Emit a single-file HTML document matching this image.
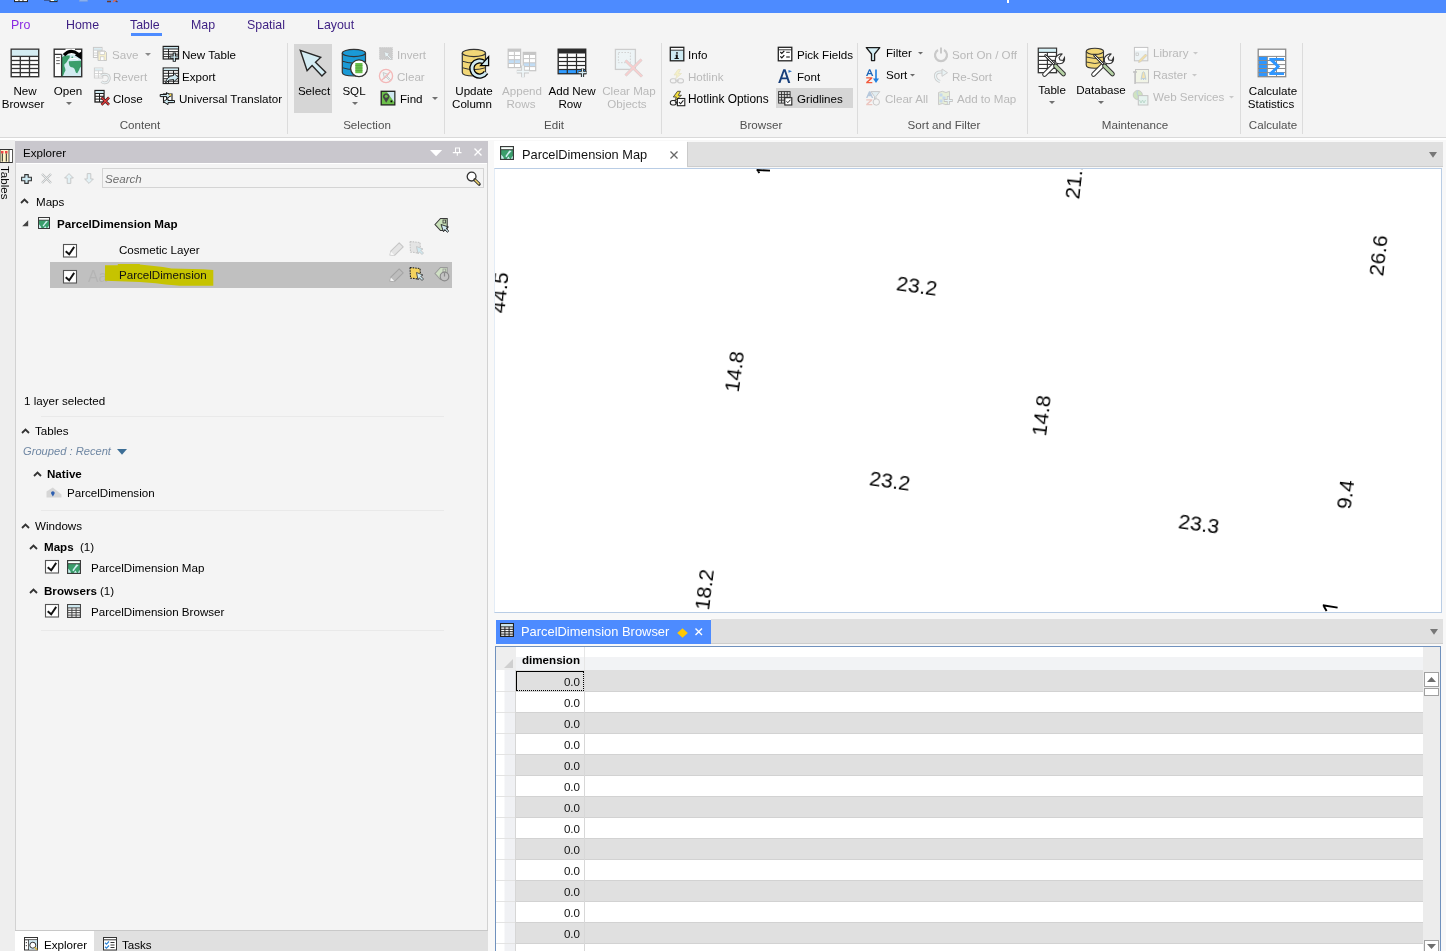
<!DOCTYPE html>
<html><head><meta charset="utf-8">
<style>
*{margin:0;padding:0;box-sizing:border-box}
html,body{width:1446px;height:951px;overflow:hidden;background:#f8f8f8;font-family:"Liberation Sans",sans-serif;font-size:11.6px;color:#000}
.a{position:absolute}
.t{position:absolute;white-space:nowrap;line-height:14px;will-change:transform}
svg{position:absolute;overflow:visible}
</style></head><body>

<div class="a" style="left:0px;top:0px;width:1446px;height:13px;background:#4d8bff;"></div>
<div class="a" style="left:0px;top:13px;width:50px;height:1px;background:#c9d9f2;"></div>
<svg style="left:14px;top:0px" width="14" height="2.2" viewBox="0 0 14 2.2"><rect x="0.5" y="-2" width="13" height="3.6" fill="#fff" stroke="#222" stroke-width="1"/><path d="M5 -2V1.6M9 -2V1.6" stroke="#222" stroke-width="1"/></svg>
<svg style="left:44px;top:0px" width="14" height="2.2" viewBox="0 0 14 2.2"><path d="M0 0.5H5" stroke="#3a5a9a" stroke-width="1"/><rect x="6" y="-2" width="7" height="3.6" fill="#fff" stroke="#222" stroke-width="1"/><rect x="10" y="-2" width="3" height="3" fill="#2a9ae8"/></svg>
<svg style="left:79px;top:0px" width="9" height="2" viewBox="0 0 9 2"><rect x="0.5" y="-2" width="8" height="3.2" fill="#8fb4f0" stroke="#7aa0e0" stroke-width="0.8"/></svg>
<svg style="left:107px;top:0px" width="11" height="2.4" viewBox="0 0 11 2.4"><path d="M0 1.5H4M6 -1 L10.5 2" stroke="#6a3a2a" stroke-width="1.4"/><path d="M6 2 L10 -1" stroke="#e06a5a" stroke-width="1.4"/></svg>
<div class="a" style="left:1007px;top:0px;width:2px;height:3px;background:#ffffff;"></div>
<div class="a" style="left:0px;top:13px;width:1446px;height:124px;background:#f4f4f4;"></div>
<div class="a" style="left:0px;top:137px;width:1446px;height:1px;background:#d9d9d9;"></div>
<div class="a" style="left:0px;top:138px;width:1446px;height:2px;background:#ffffff;"></div>
<div class="t" style="left:11px;top:18.00px;font-size:12.4px;color:#8a2be2;">Pro</div>
<div class="t" style="left:66px;top:18.00px;font-size:12.4px;color:#3c1e82;">Home</div>
<div class="t" style="left:130px;top:18.00px;font-size:12.4px;color:#3c1e82;">Table</div>
<div class="a" style="left:131px;top:33px;width:31px;height:3px;background:#4d8bff;"></div>
<div class="t" style="left:191px;top:18.00px;font-size:12.4px;color:#3c1e82;">Map</div>
<div class="t" style="left:247px;top:18.00px;font-size:12.4px;color:#3c1e82;">Spatial</div>
<div class="t" style="left:317px;top:18.00px;font-size:12.4px;color:#3c1e82;">Layout</div>
<div class="a" style="left:287px;top:43px;width:1px;height:91px;background:#dcdcdc;"></div>
<div class="a" style="left:444px;top:43px;width:1px;height:91px;background:#dcdcdc;"></div>
<div class="a" style="left:661px;top:43px;width:1px;height:91px;background:#dcdcdc;"></div>
<div class="a" style="left:857px;top:43px;width:1px;height:91px;background:#dcdcdc;"></div>
<div class="a" style="left:1027px;top:43px;width:1px;height:91px;background:#dcdcdc;"></div>
<div class="a" style="left:1240px;top:43px;width:1px;height:91px;background:#dcdcdc;"></div>
<div class="a" style="left:1302px;top:43px;width:1px;height:91px;background:#dcdcdc;"></div>
<div class="t" style="left:40px;width:200px;text-align:center;top:117.98px;font-size:11.6px;color:#505050;">Content</div>
<div class="t" style="left:266.5px;width:200px;text-align:center;top:117.98px;font-size:11.6px;color:#505050;">Selection</div>
<div class="t" style="left:454px;width:200px;text-align:center;top:117.98px;font-size:11.6px;color:#505050;">Edit</div>
<div class="t" style="left:661px;width:200px;text-align:center;top:117.98px;font-size:11.6px;color:#505050;">Browser</div>
<div class="t" style="left:843.5px;width:200px;text-align:center;top:117.98px;font-size:11.6px;color:#505050;">Sort and Filter</div>
<div class="t" style="left:1034.5px;width:200px;text-align:center;top:117.98px;font-size:11.6px;color:#505050;">Maintenance</div>
<div class="t" style="left:1172.5px;width:200px;text-align:center;top:117.98px;font-size:11.6px;color:#505050;">Calculate</div>
<div class="t" style="left:-75.5px;width:200px;text-align:center;top:83.98px;font-size:11.6px;">New</div>
<div class="t" style="left:-76.7px;width:200px;text-align:center;top:96.98px;font-size:11.6px;">Browser</div>
<div class="t" style="left:-31.599999999999994px;width:200px;text-align:center;top:83.98px;font-size:11.6px;">Open</div>
<svg style="left:65.5px;top:102px" width="6" height="4" viewBox="0 0 6 4"><path d="M0 0H6L3.0 3.0Z" fill="#707070"/></svg>
<div class="t" style="left:112px;top:47.98px;font-size:11.6px;color:#b9b9b9;">Save</div>
<svg style="left:144.5px;top:53px" width="6" height="4" viewBox="0 0 6 4"><path d="M0 0H6L3.0 3.0Z" fill="#8a8a8a"/></svg>
<div class="t" style="left:113.4px;top:69.98px;font-size:11.6px;color:#b9b9b9;">Revert</div>
<div class="t" style="left:113.4px;top:91.98px;font-size:11.6px;">Close</div>
<div class="t" style="left:182px;top:47.98px;font-size:11.6px;">New Table</div>
<div class="t" style="left:182px;top:69.98px;font-size:11.6px;">Export</div>
<div class="t" style="left:178.6px;top:91.98px;font-size:11.6px;">Universal Translator</div>
<div class="a" style="left:294px;top:44px;width:38px;height:69px;background:#d6d6d6;"></div>
<div class="t" style="left:213.5px;width:200px;text-align:center;top:83.98px;font-size:11.6px;">Select</div>
<div class="t" style="left:254px;width:200px;text-align:center;top:83.98px;font-size:11.6px;">SQL</div>
<svg style="left:351.5px;top:102px" width="6" height="4" viewBox="0 0 6 4"><path d="M0 0H6L3.0 3.0Z" fill="#707070"/></svg>
<div class="t" style="left:397.4px;top:47.98px;font-size:11.6px;color:#b9b9b9;">Invert</div>
<div class="t" style="left:397.4px;top:69.98px;font-size:11.6px;color:#b9b9b9;">Clear</div>
<div class="t" style="left:400px;top:91.98px;font-size:11.6px;">Find</div>
<svg style="left:431.5px;top:97px" width="6" height="4" viewBox="0 0 6 4"><path d="M0 0H6L3.0 3.0Z" fill="#707070"/></svg>
<div class="t" style="left:374px;width:200px;text-align:center;top:83.98px;font-size:11.6px;">Update</div>
<div class="t" style="left:372px;width:200px;text-align:center;top:96.98px;font-size:11.6px;">Column</div>
<div class="t" style="left:421.5px;width:200px;text-align:center;top:83.98px;font-size:11.6px;color:#b9b9b9;">Append</div>
<div class="t" style="left:420.5px;width:200px;text-align:center;top:96.98px;font-size:11.6px;color:#b9b9b9;">Rows</div>
<div class="t" style="left:472px;width:200px;text-align:center;top:83.98px;font-size:11.6px;">Add New</div>
<div class="t" style="left:470.29999999999995px;width:200px;text-align:center;top:96.98px;font-size:11.6px;">Row</div>
<div class="t" style="left:528.7px;width:200px;text-align:center;top:83.98px;font-size:11.6px;color:#b9b9b9;">Clear Map</div>
<div class="t" style="left:527.3px;width:200px;text-align:center;top:96.98px;font-size:11.6px;color:#b9b9b9;">Objects</div>
<div class="t" style="left:688.4px;top:47.98px;font-size:11.6px;">Info</div>
<div class="t" style="left:688.4px;top:69.98px;font-size:11.6px;color:#b9b9b9;">Hotlink</div>
<div class="t" style="left:688.4px;top:91.88px;font-size:11.9px;">Hotlink Options</div>
<div class="a" style="left:776px;top:88px;width:77px;height:20px;background:#d6d6d6;"></div>
<div class="t" style="left:796.6px;top:47.98px;font-size:11.6px;">Pick Fields</div>
<div class="t" style="left:796.6px;top:69.98px;font-size:11.6px;">Font</div>
<div class="t" style="left:796.6px;top:91.98px;font-size:11.6px;">Gridlines</div>
<div class="t" style="left:885.5px;top:46.48px;font-size:11.6px;">Filter</div>
<svg style="left:918px;top:51.5px" width="5" height="4" viewBox="0 0 5 4"><path d="M0 0H5L2.5 2.5Z" fill="#6a6a6a"/></svg>
<div class="t" style="left:885.5px;top:68.48px;font-size:11.6px;">Sort</div>
<svg style="left:910px;top:73.5px" width="5" height="4" viewBox="0 0 5 4"><path d="M0 0H5L2.5 2.5Z" fill="#6a6a6a"/></svg>
<div class="t" style="left:885px;top:91.98px;font-size:11.6px;color:#b9b9b9;">Clear All</div>
<div class="t" style="left:952px;top:47.98px;font-size:11.6px;color:#b9b9b9;">Sort On / Off</div>
<div class="t" style="left:952px;top:69.98px;font-size:11.6px;color:#b9b9b9;">Re-Sort</div>
<div class="t" style="left:956.5px;top:91.98px;font-size:11.6px;color:#b9b9b9;">Add to Map</div>
<div class="t" style="left:952px;width:200px;text-align:center;top:82.98px;font-size:11.6px;">Table</div>
<svg style="left:1049px;top:101px" width="6" height="4" viewBox="0 0 6 4"><path d="M0 0H6L3.0 3.0Z" fill="#707070"/></svg>
<div class="t" style="left:1001px;width:200px;text-align:center;top:82.98px;font-size:11.6px;">Database</div>
<svg style="left:1098px;top:101px" width="6" height="4" viewBox="0 0 6 4"><path d="M0 0H6L3.0 3.0Z" fill="#707070"/></svg>
<div class="t" style="left:1153px;top:46.48px;font-size:11.6px;color:#b9b9b9;">Library</div>
<svg style="left:1193px;top:52px" width="5" height="4" viewBox="0 0 5 4"><path d="M0 0H5L2.5 2.5Z" fill="#c8c8c8"/></svg>
<div class="t" style="left:1153px;top:68.48px;font-size:11.6px;color:#b9b9b9;">Raster</div>
<svg style="left:1192px;top:74px" width="5" height="4" viewBox="0 0 5 4"><path d="M0 0H5L2.5 2.5Z" fill="#c8c8c8"/></svg>
<div class="t" style="left:1153px;top:90.48px;font-size:11.6px;color:#b9b9b9;">Web Services</div>
<svg style="left:1228.5px;top:96px" width="5" height="4" viewBox="0 0 5 4"><path d="M0 0H5L2.5 2.5Z" fill="#c8c8c8"/></svg>
<div class="t" style="left:1172.7px;width:200px;text-align:center;top:83.98px;font-size:11.6px;">Calculate</div>
<div class="t" style="left:1171.2px;width:200px;text-align:center;top:96.98px;font-size:11.6px;">Statistics</div>
<div class="a" style="left:0px;top:140px;width:15px;height:811px;background:#eeeeee;"></div>
<div class="t" style="left:-11px;top:175px;font-size:11.6px;transform:rotate(90deg);transform-origin:center;width:32px;">Tables</div>
<div class="a" style="left:15px;top:141px;width:473px;height:22px;background:#c9c7cd;"></div>
<div class="t" style="left:23px;top:145.98px;font-size:11.6px;">Explorer</div>
<div class="a" style="left:15px;top:163px;width:473px;height:767px;background:#f4f4f4;"></div>
<div class="a" style="left:15px;top:163px;width:1px;height:767px;background:#d2d2d2;"></div>
<div class="a" style="left:487px;top:163px;width:1px;height:767px;background:#d2d2d2;"></div>
<div class="a" style="left:16px;top:163px;width:471px;height:1px;background:#ffffff;"></div>
<div class="a" style="left:15px;top:930px;width:473px;height:1px;background:#c8c8c8;"></div>
<div class="a" style="left:15px;top:931px;width:473px;height:20px;background:#e0e0e0;"></div>
<div class="a" style="left:15px;top:931px;width:79px;height:20px;background:#ffffff;"></div>
<div class="t" style="left:43.6px;top:937.78px;font-size:11.6px;">Explorer</div>
<div class="t" style="left:122px;top:937.78px;font-size:11.6px;">Tasks</div>
<div class="a" style="left:102px;top:168px;width:382px;height:20px;background:#f4f4f4;border:1px solid #d4d4d4"></div>
<div class="t" style="left:105px;top:171.98px;font-size:11.6px;color:#6e6e6e;font-style:italic;">Search</div>
<div class="t" style="left:35.7px;top:195.48px;font-size:11.6px;">Maps</div>
<div class="t" style="left:57.3px;top:216.98px;font-size:11.6px;font-weight:bold;">ParcelDimension Map</div>
<div class="t" style="left:118.7px;top:242.78px;font-size:11.6px;">Cosmetic Layer</div>
<div class="a" style="left:50px;top:262px;width:402px;height:26px;background:#c0c0c0;"></div>
<div class="t" style="left:24.2px;top:393.98px;font-size:11.6px;">1 layer selected</div>
<div class="a" style="left:41px;top:416px;width:403px;height:1px;background:#e9e9e9;"></div>
<div class="t" style="left:34.6px;top:424.28px;font-size:11.6px;">Tables</div>
<div class="t" style="left:22.5px;top:444.14px;font-size:11.15px;color:#6f87a3;font-style:italic;">Grouped : Recent</div>
<div class="t" style="left:47.4px;top:466.98px;font-size:11.6px;font-weight:bold;">Native</div>
<div class="t" style="left:66.7px;top:485.98px;font-size:11.6px;">ParcelDimension</div>
<div class="a" style="left:41px;top:510px;width:403px;height:1px;background:#e9e9e9;"></div>
<div class="t" style="left:34.6px;top:518.68px;font-size:11.6px;">Windows</div>
<div class="t" style="left:44.3px;top:540.18px;font-size:11.6px;font-weight:bold;">Maps</div>
<div class="t" style="left:79.5px;top:540.18px;font-size:11.6px;">(1)</div>
<div class="t" style="left:91px;top:560.98px;font-size:11.6px;">ParcelDimension Map</div>
<div class="t" style="left:44.3px;top:583.98px;font-size:11.6px;font-weight:bold;">Browsers</div>
<div class="t" style="left:100px;top:583.98px;font-size:11.6px;">(1)</div>
<div class="t" style="left:91px;top:604.98px;font-size:11.6px;">ParcelDimension Browser</div>
<div class="a" style="left:41px;top:630px;width:403px;height:1px;background:#e9e9e9;"></div>
<div class="a" style="left:494px;top:141px;width:193px;height:27px;background:#ffffff;"></div>
<div class="t" style="left:521.5px;top:148.06px;font-size:12.8px;color:#111;">ParcelDimension Map</div>
<div class="a" style="left:687px;top:142px;width:756px;height:25px;background:#e0e0e0;"></div>
<div class="a" style="left:687px;top:142px;width:1px;height:25px;background:#cacaca;"></div>
<div class="a" style="left:687px;top:166px;width:756px;height:1px;background:#cdcdcd;"></div>
<div class="a" style="left:494px;top:168px;width:948px;height:445px;background:#ffffff;border:1px solid #b9cde5;border-left-color:#e3ecf6"></div>
<div class="a" style="left:496px;top:620px;width:215px;height:24px;background:#4d8bff;"></div>
<div class="t" style="left:521.3px;top:625.43px;font-size:12.9px;color:#ffffff;">ParcelDimension Browser</div>
<div class="a" style="left:711px;top:619px;width:732px;height:24px;background:#e0e0e0;"></div>
<div class="a" style="left:711px;top:643px;width:732px;height:1px;background:#cdcdcd;"></div>
<div class="a" style="left:495px;top:646px;width:946px;height:305px;background:#ffffff;border:1px solid #7091bd;border-bottom:none"></div>
<div class="a" style="left:495px;top:169px;width:946px;height:443px;overflow:hidden">
<div class="t" style="left:361.7px;top:106.3px;width:120px;text-align:center;font-size:21px;line-height:21px;color:#000;transform:rotate(8deg)">23.2</div>
<div class="t" style="left:179.3px;top:192.0px;width:120px;text-align:center;font-size:21px;line-height:21px;color:#000;transform:rotate(-82deg)">14.8</div>
<div class="t" style="left:518.5px;top:-1.0px;width:120px;text-align:center;font-size:21px;line-height:21px;color:#000;transform:rotate(-83.5deg)">21.1</div>
<div class="t" style="left:822.5px;top:76.3px;width:120px;text-align:center;font-size:21px;line-height:21px;color:#000;transform:rotate(-83.5deg)">26.6</div>
<div class="t" style="left:-56.5px;top:112.5px;width:120px;text-align:center;font-size:21px;line-height:21px;color:#000;transform:rotate(-84deg)">44.5</div>
<div class="t" style="left:486.1px;top:235.7px;width:120px;text-align:center;font-size:21px;line-height:21px;color:#000;transform:rotate(-83deg)">14.8</div>
<div class="t" style="left:334.7px;top:301.1px;width:120px;text-align:center;font-size:21px;line-height:21px;color:#000;transform:rotate(8deg)">23.2</div>
<div class="t" style="left:643.5px;top:344.1px;width:120px;text-align:center;font-size:21px;line-height:21px;color:#000;transform:rotate(8deg)">23.3</div>
<div class="t" style="left:790.0px;top:314.5px;width:120px;text-align:center;font-size:21px;line-height:21px;color:#000;transform:rotate(-83deg)">9.4</div>
<div class="t" style="left:149.0px;top:410.2px;width:120px;text-align:center;font-size:21px;line-height:21px;color:#000;transform:rotate(-83deg)">18.2</div>
</div>
<svg style="left:740px;top:160px" width="50" height="30" viewBox="0 0 50 30"><path d="M16.6 10 L30 10.6 M17.2 10 L19.4 13" stroke="#000" stroke-width="1.9"/></svg>
<svg style="left:1310px;top:590px" width="40" height="30" viewBox="0 0 40 30"><path d="M12.8 15.3 L27.6 17.6 M13.4 15.4 L16.6 20.9" stroke="#000" stroke-width="1.9"/></svg>
<div class="a" style="left:496px;top:647px;width:927px;height:23px;background:linear-gradient(#ffffff 0,#ffffff 45%,#f2f3f5 45%,#f2f3f5 100%);"></div>
<div class="a" style="left:496px;top:647px;width:20px;height:23px;background:#eeeeee;"></div>
<svg style="left:504px;top:659px" width="9" height="9" viewBox="0 0 9 9"><path d="M9 0V9H0Z" fill="#cfcfcf"/></svg>
<div class="t" style="left:522px;top:653.18px;font-size:11.6px;color:#000;font-weight:bold;">dimension</div>
<div class="a" style="left:584px;top:647px;width:1px;height:23px;background:#e6e6e6;"></div>
<div class="a" style="left:496px;top:670px;width:20px;height:21px;background:linear-gradient(90deg,#ffffff 0,#ffffff 40%,#f0f1f4 45%,#f0f1f4 100%);"></div>
<div class="a" style="left:516px;top:670px;width:907px;height:21px;background:#e0e0e0;"></div>
<div class="a" style="left:515px;top:670px;width:1px;height:21px;background:#d6d6d6;"></div>
<div class="a" style="left:584px;top:670px;width:1px;height:21px;background:#d8d8d8;"></div>
<div class="t" style="left:520px;width:60px;text-align:right;top:674.98px;color:#111">0.0</div>
<div class="a" style="left:496px;top:691px;width:20px;height:21px;background:linear-gradient(90deg,#ffffff 0,#ffffff 40%,#f0f1f4 45%,#f0f1f4 100%);"></div>
<div class="a" style="left:516px;top:691px;width:907px;height:21px;background:#ffffff;"></div>
<div class="a" style="left:496px;top:691px;width:20px;height:1px;background:#e3e3e3;"></div>
<div class="a" style="left:516px;top:691px;width:907px;height:1px;background:#d2d2d2;"></div>
<div class="a" style="left:515px;top:691px;width:1px;height:21px;background:#d6d6d6;"></div>
<div class="a" style="left:584px;top:691px;width:1px;height:21px;background:#d8d8d8;"></div>
<div class="t" style="left:520px;width:60px;text-align:right;top:695.98px;color:#111">0.0</div>
<div class="a" style="left:496px;top:712px;width:20px;height:21px;background:linear-gradient(90deg,#ffffff 0,#ffffff 40%,#f0f1f4 45%,#f0f1f4 100%);"></div>
<div class="a" style="left:516px;top:712px;width:907px;height:21px;background:#e0e0e0;"></div>
<div class="a" style="left:496px;top:712px;width:20px;height:1px;background:#e3e3e3;"></div>
<div class="a" style="left:516px;top:712px;width:907px;height:1px;background:#d2d2d2;"></div>
<div class="a" style="left:515px;top:712px;width:1px;height:21px;background:#d6d6d6;"></div>
<div class="a" style="left:584px;top:712px;width:1px;height:21px;background:#d8d8d8;"></div>
<div class="t" style="left:520px;width:60px;text-align:right;top:716.98px;color:#111">0.0</div>
<div class="a" style="left:496px;top:733px;width:20px;height:21px;background:linear-gradient(90deg,#ffffff 0,#ffffff 40%,#f0f1f4 45%,#f0f1f4 100%);"></div>
<div class="a" style="left:516px;top:733px;width:907px;height:21px;background:#ffffff;"></div>
<div class="a" style="left:496px;top:733px;width:20px;height:1px;background:#e3e3e3;"></div>
<div class="a" style="left:516px;top:733px;width:907px;height:1px;background:#d2d2d2;"></div>
<div class="a" style="left:515px;top:733px;width:1px;height:21px;background:#d6d6d6;"></div>
<div class="a" style="left:584px;top:733px;width:1px;height:21px;background:#d8d8d8;"></div>
<div class="t" style="left:520px;width:60px;text-align:right;top:737.98px;color:#111">0.0</div>
<div class="a" style="left:496px;top:754px;width:20px;height:21px;background:linear-gradient(90deg,#ffffff 0,#ffffff 40%,#f0f1f4 45%,#f0f1f4 100%);"></div>
<div class="a" style="left:516px;top:754px;width:907px;height:21px;background:#e0e0e0;"></div>
<div class="a" style="left:496px;top:754px;width:20px;height:1px;background:#e3e3e3;"></div>
<div class="a" style="left:516px;top:754px;width:907px;height:1px;background:#d2d2d2;"></div>
<div class="a" style="left:515px;top:754px;width:1px;height:21px;background:#d6d6d6;"></div>
<div class="a" style="left:584px;top:754px;width:1px;height:21px;background:#d8d8d8;"></div>
<div class="t" style="left:520px;width:60px;text-align:right;top:758.98px;color:#111">0.0</div>
<div class="a" style="left:496px;top:775px;width:20px;height:21px;background:linear-gradient(90deg,#ffffff 0,#ffffff 40%,#f0f1f4 45%,#f0f1f4 100%);"></div>
<div class="a" style="left:516px;top:775px;width:907px;height:21px;background:#ffffff;"></div>
<div class="a" style="left:496px;top:775px;width:20px;height:1px;background:#e3e3e3;"></div>
<div class="a" style="left:516px;top:775px;width:907px;height:1px;background:#d2d2d2;"></div>
<div class="a" style="left:515px;top:775px;width:1px;height:21px;background:#d6d6d6;"></div>
<div class="a" style="left:584px;top:775px;width:1px;height:21px;background:#d8d8d8;"></div>
<div class="t" style="left:520px;width:60px;text-align:right;top:779.98px;color:#111">0.0</div>
<div class="a" style="left:496px;top:796px;width:20px;height:21px;background:linear-gradient(90deg,#ffffff 0,#ffffff 40%,#f0f1f4 45%,#f0f1f4 100%);"></div>
<div class="a" style="left:516px;top:796px;width:907px;height:21px;background:#e0e0e0;"></div>
<div class="a" style="left:496px;top:796px;width:20px;height:1px;background:#e3e3e3;"></div>
<div class="a" style="left:516px;top:796px;width:907px;height:1px;background:#d2d2d2;"></div>
<div class="a" style="left:515px;top:796px;width:1px;height:21px;background:#d6d6d6;"></div>
<div class="a" style="left:584px;top:796px;width:1px;height:21px;background:#d8d8d8;"></div>
<div class="t" style="left:520px;width:60px;text-align:right;top:800.98px;color:#111">0.0</div>
<div class="a" style="left:496px;top:817px;width:20px;height:21px;background:linear-gradient(90deg,#ffffff 0,#ffffff 40%,#f0f1f4 45%,#f0f1f4 100%);"></div>
<div class="a" style="left:516px;top:817px;width:907px;height:21px;background:#ffffff;"></div>
<div class="a" style="left:496px;top:817px;width:20px;height:1px;background:#e3e3e3;"></div>
<div class="a" style="left:516px;top:817px;width:907px;height:1px;background:#d2d2d2;"></div>
<div class="a" style="left:515px;top:817px;width:1px;height:21px;background:#d6d6d6;"></div>
<div class="a" style="left:584px;top:817px;width:1px;height:21px;background:#d8d8d8;"></div>
<div class="t" style="left:520px;width:60px;text-align:right;top:821.98px;color:#111">0.0</div>
<div class="a" style="left:496px;top:838px;width:20px;height:21px;background:linear-gradient(90deg,#ffffff 0,#ffffff 40%,#f0f1f4 45%,#f0f1f4 100%);"></div>
<div class="a" style="left:516px;top:838px;width:907px;height:21px;background:#e0e0e0;"></div>
<div class="a" style="left:496px;top:838px;width:20px;height:1px;background:#e3e3e3;"></div>
<div class="a" style="left:516px;top:838px;width:907px;height:1px;background:#d2d2d2;"></div>
<div class="a" style="left:515px;top:838px;width:1px;height:21px;background:#d6d6d6;"></div>
<div class="a" style="left:584px;top:838px;width:1px;height:21px;background:#d8d8d8;"></div>
<div class="t" style="left:520px;width:60px;text-align:right;top:842.98px;color:#111">0.0</div>
<div class="a" style="left:496px;top:859px;width:20px;height:21px;background:linear-gradient(90deg,#ffffff 0,#ffffff 40%,#f0f1f4 45%,#f0f1f4 100%);"></div>
<div class="a" style="left:516px;top:859px;width:907px;height:21px;background:#ffffff;"></div>
<div class="a" style="left:496px;top:859px;width:20px;height:1px;background:#e3e3e3;"></div>
<div class="a" style="left:516px;top:859px;width:907px;height:1px;background:#d2d2d2;"></div>
<div class="a" style="left:515px;top:859px;width:1px;height:21px;background:#d6d6d6;"></div>
<div class="a" style="left:584px;top:859px;width:1px;height:21px;background:#d8d8d8;"></div>
<div class="t" style="left:520px;width:60px;text-align:right;top:863.98px;color:#111">0.0</div>
<div class="a" style="left:496px;top:880px;width:20px;height:21px;background:linear-gradient(90deg,#ffffff 0,#ffffff 40%,#f0f1f4 45%,#f0f1f4 100%);"></div>
<div class="a" style="left:516px;top:880px;width:907px;height:21px;background:#e0e0e0;"></div>
<div class="a" style="left:496px;top:880px;width:20px;height:1px;background:#e3e3e3;"></div>
<div class="a" style="left:516px;top:880px;width:907px;height:1px;background:#d2d2d2;"></div>
<div class="a" style="left:515px;top:880px;width:1px;height:21px;background:#d6d6d6;"></div>
<div class="a" style="left:584px;top:880px;width:1px;height:21px;background:#d8d8d8;"></div>
<div class="t" style="left:520px;width:60px;text-align:right;top:884.98px;color:#111">0.0</div>
<div class="a" style="left:496px;top:901px;width:20px;height:21px;background:linear-gradient(90deg,#ffffff 0,#ffffff 40%,#f0f1f4 45%,#f0f1f4 100%);"></div>
<div class="a" style="left:516px;top:901px;width:907px;height:21px;background:#ffffff;"></div>
<div class="a" style="left:496px;top:901px;width:20px;height:1px;background:#e3e3e3;"></div>
<div class="a" style="left:516px;top:901px;width:907px;height:1px;background:#d2d2d2;"></div>
<div class="a" style="left:515px;top:901px;width:1px;height:21px;background:#d6d6d6;"></div>
<div class="a" style="left:584px;top:901px;width:1px;height:21px;background:#d8d8d8;"></div>
<div class="t" style="left:520px;width:60px;text-align:right;top:905.98px;color:#111">0.0</div>
<div class="a" style="left:496px;top:922px;width:20px;height:21px;background:linear-gradient(90deg,#ffffff 0,#ffffff 40%,#f0f1f4 45%,#f0f1f4 100%);"></div>
<div class="a" style="left:516px;top:922px;width:907px;height:21px;background:#e0e0e0;"></div>
<div class="a" style="left:496px;top:922px;width:20px;height:1px;background:#e3e3e3;"></div>
<div class="a" style="left:516px;top:922px;width:907px;height:1px;background:#d2d2d2;"></div>
<div class="a" style="left:515px;top:922px;width:1px;height:21px;background:#d6d6d6;"></div>
<div class="a" style="left:584px;top:922px;width:1px;height:21px;background:#d8d8d8;"></div>
<div class="t" style="left:520px;width:60px;text-align:right;top:926.98px;color:#111">0.0</div>
<div class="a" style="left:496px;top:943px;width:20px;height:21px;background:linear-gradient(90deg,#ffffff 0,#ffffff 40%,#f0f1f4 45%,#f0f1f4 100%);"></div>
<div class="a" style="left:516px;top:943px;width:907px;height:21px;background:#ffffff;"></div>
<div class="a" style="left:496px;top:943px;width:20px;height:1px;background:#e3e3e3;"></div>
<div class="a" style="left:516px;top:943px;width:907px;height:1px;background:#d2d2d2;"></div>
<div class="a" style="left:515px;top:943px;width:1px;height:21px;background:#d6d6d6;"></div>
<div class="a" style="left:584px;top:943px;width:1px;height:21px;background:#d8d8d8;"></div>
<div class="t" style="left:520px;width:60px;text-align:right;top:947.98px;color:#111">0.0</div>
<div class="a" style="left:516px;top:671px;width:68px;height:20px;background:transparent;border:1px solid #000;border-right:1px dotted #000;border-bottom:1px dotted #000"></div>
<div class="a" style="left:1423px;top:647px;width:17px;height:304px;background:#ececec;"></div>
<div class="a" style="left:1424px;top:672px;width:15px;height:15px;background:#ffffff;border:1px solid #a0a0a0"></div>
<svg style="left:1427px;top:677px" width="9" height="5" viewBox="0 0 9 5"><path d="M0 5H9L4.5 0Z" fill="#6e6e6e"/></svg>
<div class="a" style="left:1424px;top:688px;width:15px;height:8px;background:#ffffff;border:1px solid #a0a0a0"></div>
<div class="a" style="left:1424px;top:940px;width:15px;height:12px;background:#ffffff;border:1px solid #a0a0a0"></div>
<svg style="left:1427px;top:944px" width="9" height="5" viewBox="0 0 9 5"><path d="M0 0H9L4.5 5Z" fill="#6e6e6e"/></svg>
<svg style="left:8px;top:46px" width="34" height="34" viewBox="0 0 34 34"><rect x="3.2" y="3.2" width="27.5" height="27.5" fill="#fff" stroke="#333" stroke-width="1.4"/><rect x="3.9" y="3.9" width="26.1" height="6.5" fill="#d4ecf2"/><line x1="3.2" y1="10.4" x2="30.7" y2="10.4" stroke="#333333" stroke-width="1.3"/><line x1="3.2" y1="14.5" x2="30.7" y2="14.5" stroke="#333333" stroke-width="1.3"/><line x1="3.2" y1="18.6" x2="30.7" y2="18.6" stroke="#333333" stroke-width="1.3"/><line x1="3.2" y1="22.5" x2="30.7" y2="22.5" stroke="#333333" stroke-width="1.3"/><line x1="3.2" y1="26.6" x2="30.7" y2="26.6" stroke="#333333" stroke-width="1.3"/><line x1="12.3" y1="10.4" x2="12.3" y2="30.7" stroke="#333333" stroke-width="1.3"/><line x1="21.5" y1="10.4" x2="21.5" y2="30.7" stroke="#333333" stroke-width="1.3"/></svg>
<svg style="left:51px;top:46px" width="34" height="34" viewBox="0 0 34 34"><rect x="3.2" y="3.2" width="27.5" height="27.5" fill="#fff" stroke="#333" stroke-width="1.4"/><rect x="10.6" y="8.5" width="19.4" height="21.5" fill="#d2ebf1"/><path d="M10.6 11.5 Q13 9.3 16.5 9.5 L18.8 9.6 Q19.2 12 17.2 13.5 L15.6 16.2 Q14.3 17.6 13.4 18.2 Q12.7 20.3 14.2 22.6 Q15.2 24.5 13.4 26.5 L12 30 L10.6 30Z" fill="#3a9e6b"/><circle cx="21.3" cy="11.5" r="0.9" fill="#3a9e6b"/><path d="M17.8 15.2 L30 14.8 L30 20.8 Q28.6 21.8 28.2 23.8 L26.3 27.3 Q24.6 27.2 24.3 25 Q23.7 22.3 22 21.6 Q19.2 21.7 18.4 19.6 Q17.6 17.2 17.8 15.2Z" fill="#3a9e6b"/><path d="M3.2 8.3 H10.6 M10.6 8.3 V30.7" stroke="#333" stroke-width="1.3" fill="none"/><path d="M5.2 11.6H8.8M5.2 14.6H8.8M5.2 17.6H8.8" stroke="#555" stroke-width="0.9"/><path d="M14.5 3.5 H24" stroke="#fff" stroke-width="1.6"/><path d="M13 9.2 Q19.5 2.2 27.2 8.2" stroke="#000" stroke-width="3.2" fill="none"/><path d="M23.8 9.2 L30.7 5.5 L30.7 13.8Z" fill="#000"/><path d="M19 13.2 Q23 11.5 27 13.5" stroke="#fff" stroke-width="1.2" fill="none"/></svg>
<svg style="left:296px;top:46px" width="34" height="34" viewBox="0 0 34 34"><path d="M4.3 4.3 L24.7 11.4 L19.5 16.3 L29.7 26.3 L25.9 29.9 L16.1 19.5 L11.1 24.7Z" fill="#d4ecf3" stroke="#262626" stroke-width="1.4" stroke-linejoin="miter"/></svg>
<svg style="left:338px;top:46px" width="34" height="34" viewBox="0 0 34 34"><path d="M4.3 7 V26.5 Q4.3 30 15.9 30 Q27.5 30 27.5 26.5 V7" fill="#1a9ad6" stroke="#333" stroke-width="1.2"/><ellipse cx="15.9" cy="7" rx="11.6" ry="3.6" fill="#1a9ad6" stroke="#333" stroke-width="1.2"/><path d="M4.3 15.2 Q15.9 19 27.5 15.2 M4.3 21.7 Q15.9 25.5 27.5 21.7" stroke="#333" stroke-width="1" fill="none"/><circle cx="21" cy="22.3" r="8.4" fill="#fff" stroke="#333" stroke-width="1.3"/><rect x="17.3" y="17" width="7.2" height="10.2" fill="#6abf4b"/><path d="M17.3 19.5H24.5M17.3 22H24.5M17.3 24.5H24.5" stroke="#4e9a36" stroke-width="0.6"/></svg>
<svg style="left:458px;top:46px" width="34" height="34" viewBox="0 0 34 34"><path d="M4.3 7 V26.5 Q4.3 30 15.9 30 Q27.5 30 27.5 26.5 V7" fill="#f2d777" stroke="#333" stroke-width="1.2"/><ellipse cx="15.9" cy="7" rx="11.6" ry="3.6" fill="#f2d777" stroke="#333" stroke-width="1.2"/><path d="M4.3 15.2 Q15.9 19 27.5 15.2 M4.3 21.7 Q15.9 25.5 27.5 21.7" stroke="#333" stroke-width="1" fill="none"/><path d="M25.8 16.2 A7.6 7.6 0 1 0 28 26.5" stroke="#000" stroke-width="5.4" fill="none"/><path d="M25.8 16.2 A7.6 7.6 0 1 0 28 26.5" stroke="#cfe9f0" stroke-width="2.8" fill="none"/><path d="M22.6 19.6 L30.6 19.6 L30.6 10.6 Z" fill="#cfe9f0" stroke="#000" stroke-width="1.3" stroke-linejoin="miter"/></svg>
<svg style="left:505px;top:46px" width="34" height="34" viewBox="0 0 34 34"><rect x="3.2" y="3.2" width="12.4" height="18.4" fill="#fff" stroke="#c6c6c6" stroke-width="1.2"/><rect x="3.2" y="3.2" width="12.4" height="2.6" fill="#c6c6c6"/><rect x="3.8" y="13.7" width="11.2" height="3.8" fill="#c2ddf5"/><line x1="3.2" y1="9.5" x2="15.6" y2="9.5" stroke="#c6c6c6" stroke-width="1"/><line x1="3.2" y1="13.7" x2="15.6" y2="13.7" stroke="#c6c6c6" stroke-width="1"/><line x1="3.2" y1="17.5" x2="15.6" y2="17.5" stroke="#c6c6c6" stroke-width="1"/><line x1="9.4" y1="5.8" x2="9.4" y2="21.6" stroke="#c6c6c6" stroke-width="1"/><rect x="18.3" y="6.4" width="12.4" height="18.3" fill="#fff" stroke="#c6c6c6" stroke-width="1.2"/><rect x="18.3" y="6.4" width="12.4" height="2.6" fill="#c6c6c6"/><rect x="18.9" y="16.8" width="11.2" height="3.8" fill="#c2ddf5"/><line x1="18.3" y1="12.6" x2="30.7" y2="12.6" stroke="#c6c6c6" stroke-width="1"/><line x1="18.3" y1="16.8" x2="30.7" y2="16.8" stroke="#c6c6c6" stroke-width="1"/><line x1="18.3" y1="20.6" x2="30.7" y2="20.6" stroke="#c6c6c6" stroke-width="1"/><line x1="24.5" y1="9" x2="24.5" y2="24.7" stroke="#c6c6c6" stroke-width="1"/><path d="M18 19.5V31.2M11.8 25.6H24" stroke="#c8c8c8" stroke-width="3.6"/><path d="M18 19.5V31.2M11.8 25.6H24" stroke="#eef6f8" stroke-width="1.8"/></svg>
<svg style="left:555px;top:46px" width="34" height="34" viewBox="0 0 34 34"><rect x="3.2" y="3.2" width="27.5" height="24.5" fill="#fff" stroke="#2b2b2b" stroke-width="1.4"/><rect x="3.2" y="3.2" width="27.5" height="4.3" fill="#2b2b2b"/><rect x="3.9" y="23.5" width="26.1" height="3.6" fill="#2f9bff"/><line x1="3.2" y1="11.5" x2="30.7" y2="11.5" stroke="#2b2b2b" stroke-width="1.2"/><line x1="3.2" y1="15.5" x2="30.7" y2="15.5" stroke="#2b2b2b" stroke-width="1.2"/><line x1="3.2" y1="19.5" x2="30.7" y2="19.5" stroke="#2b2b2b" stroke-width="1.2"/><line x1="3.2" y1="23.5" x2="30.7" y2="23.5" stroke="#2b2b2b" stroke-width="1.2"/><line x1="12.3" y1="7.5" x2="12.3" y2="27.7" stroke="#2b2b2b" stroke-width="1.2"/><line x1="21.5" y1="7.5" x2="21.5" y2="27.7" stroke="#2b2b2b" stroke-width="1.2"/><path d="M27.5 22.5V31M23.5 26.5H31.5" stroke="#1a1a1a" stroke-width="3.2"/><path d="M27.5 22.5V31M23.5 26.5H31.5" stroke="#d4ecf3" stroke-width="1.3"/></svg>
<svg style="left:612px;top:46px" width="34" height="34" viewBox="0 0 34 34"><rect x="3.4" y="3.4" width="20" height="20" fill="#edf4f6" stroke="#cdcdcd" stroke-width="1.3"/><rect x="6.4" y="6.5" width="12" height="10.2" fill="none" stroke="#cfcfcf" stroke-width="0.9" stroke-dasharray="1.6 1.4"/><path d="M13.5 14.5 L30 30.5 M29.5 13.5 L13.5 29.5" stroke="#cfcfcf" stroke-width="3"/><path d="M13.5 14.5 L30 30.5 M29.5 13.5 L13.5 29.5" stroke="#f7cfcf" stroke-width="1.8"/></svg>
<svg style="left:1034px;top:45px" width="34" height="34" viewBox="0 0 34 34"><rect x="4.3" y="3.2" width="18.2" height="24.5" fill="#fff" stroke="#333" stroke-width="1.3"/><rect x="4.9" y="3.8" width="17" height="3.6" fill="#d4f0f6"/><line x1="4.3" y1="7.4" x2="22.5" y2="7.4" stroke="#333" stroke-width="1.1"/><line x1="4.3" y1="11.4" x2="22.5" y2="11.4" stroke="#333" stroke-width="1.1"/><line x1="4.3" y1="15.4" x2="22.5" y2="15.4" stroke="#333" stroke-width="1.1"/><line x1="4.3" y1="19.4" x2="22.5" y2="19.4" stroke="#333" stroke-width="1.1"/><line x1="4.3" y1="23.5" x2="22.5" y2="23.5" stroke="#333" stroke-width="1.1"/><line x1="13.4" y1="7.4" x2="13.4" y2="27.7" stroke="#333" stroke-width="1.1"/><path d="M10.5 29.5 L22 18" stroke="#333" stroke-width="4.6" stroke-linecap="round"/><path d="M10.5 29.5 L22 18" stroke="#fff" stroke-width="2.6" stroke-linecap="round"/><path d="M22 18 Q20 13 23.5 10.5 Q26 8.5 28 9 L25 12.5 L26 15 L29 15.5 L30.5 12.5 Q31 16 28.5 18 Q25.5 19.5 22 18Z" fill="#fff" stroke="#333" stroke-width="1.1"/><path d="M11.5 10.5 L21 20" stroke="#333" stroke-width="2.6" stroke-linecap="round"/><path d="M11.5 10.5 L21 20" stroke="#fff" stroke-width="0.9"/><path d="M21.5 21 L29.5 29" stroke="#333" stroke-width="4.6" stroke-linecap="round"/><path d="M21.5 21 L29.5 29" stroke="#b7d3a6" stroke-width="2.6" stroke-linecap="round"/></svg>
<svg style="left:1083px;top:45px" width="34" height="34" viewBox="0 0 34 34"><path d="M3.2 6.5 V20 Q3.2 23.3 11.9 23.3 Q20.5 23.3 20.5 20 V6.5" fill="#f2d777" stroke="#333" stroke-width="1.1"/><ellipse cx="11.9" cy="6.3" rx="8.7" ry="3.1" fill="#f2d777" stroke="#333" stroke-width="1.1"/><path d="M3.2 12 Q11.9 15 20.5 12 M3.2 17 Q11.9 20 20.5 17" stroke="#333" stroke-width="0.9" fill="none"/><path d="M10.5 29.5 L22 18" stroke="#333" stroke-width="4.6" stroke-linecap="round"/><path d="M10.5 29.5 L22 18" stroke="#fff" stroke-width="2.6" stroke-linecap="round"/><path d="M22 18 Q20 13 23.5 10.5 Q26 8.5 28 9 L25 12.5 L26 15 L29 15.5 L30.5 12.5 Q31 16 28.5 18 Q25.5 19.5 22 18Z" fill="#fff" stroke="#333" stroke-width="1.1"/><path d="M11.5 10.5 L21 20" stroke="#333" stroke-width="2.6" stroke-linecap="round"/><path d="M11.5 10.5 L21 20" stroke="#fff" stroke-width="0.9"/><path d="M21.5 21 L29.5 29" stroke="#333" stroke-width="4.6" stroke-linecap="round"/><path d="M21.5 21 L29.5 29" stroke="#b7d3a6" stroke-width="2.6" stroke-linecap="round"/></svg>
<svg style="left:1255px;top:46px" width="34" height="34" viewBox="0 0 34 34"><rect x="3.2" y="3.2" width="27.5" height="27.5" fill="#fff" stroke="#8a8a8a" stroke-width="1.3"/><rect x="3.9" y="10.6" width="8.4" height="19.5" fill="#2e96ff"/><line x1="3.2" y1="10.4" x2="30.7" y2="10.4" stroke="#8a8a8a" stroke-width="1"/><line x1="3.2" y1="14.5" x2="30.7" y2="14.5" stroke="#8a8a8a" stroke-width="1"/><line x1="3.2" y1="18.6" x2="30.7" y2="18.6" stroke="#8a8a8a" stroke-width="1"/><line x1="3.2" y1="22.5" x2="30.7" y2="22.5" stroke="#8a8a8a" stroke-width="1"/><line x1="3.2" y1="26.6" x2="30.7" y2="26.6" stroke="#8a8a8a" stroke-width="1"/><line x1="12.3" y1="10.4" x2="12.3" y2="30.7" stroke="#8a8a8a" stroke-width="1"/><line x1="21.5" y1="10.4" x2="21.5" y2="30.7" stroke="#8a8a8a" stroke-width="1"/><path d="M14.3 11.9 H29 V14.3 H19 L25.2 20.4 L19 26.6 H29 V29 H14.3 V26.8 L21.3 20.4 L14.3 14.2Z" fill="#2e96ff"/></svg>
<svg style="left:90px;top:44px" width="22" height="64" viewBox="0 0 22 64"><rect x="3.4" y="3.4" width="8.6" height="10.1" fill="#fff" stroke="#c8c8c8" stroke-width="1"/><rect x="4.0" y="4.0" width="7.3999999999999995" height="2.2" fill="#dcedf2"/><line x1="3.4" y1="6.2" x2="12" y2="6.2" stroke="#c8c8c8" stroke-width="0.8"/><line x1="3.4" y1="9" x2="12" y2="9" stroke="#c8c8c8" stroke-width="0.8"/><line x1="3.4" y1="11.3" x2="12" y2="11.3" stroke="#c8c8c8" stroke-width="0.8"/><line x1="7.5" y1="6.2" x2="7.5" y2="13.5" stroke="#c8c8c8" stroke-width="0.8"/><path d="M8 7 H15 L16.5 8.5 V16.5 H8Z" fill="#f6efcc" stroke="#c8c8c8" stroke-width="1"/><rect x="10" y="7.3" width="4.5" height="3.2" fill="#fff" stroke="#c8c8c8" stroke-width="0.7"/><rect x="10.5" y="12.8" width="3.5" height="3.6" fill="#fff" stroke="#c8c8c8" stroke-width="0.7"/><rect x="4.4" y="24" width="8.4" height="10" fill="#fff" stroke="#cfcfcf" stroke-width="1"/><rect x="5.0" y="24.6" width="7.2" height="2.2000000000000006" fill="#dcedf2"/><line x1="4.4" y1="26.8" x2="12.8" y2="26.8" stroke="#cfcfcf" stroke-width="0.8"/><line x1="4.4" y1="29.5" x2="12.8" y2="29.5" stroke="#cfcfcf" stroke-width="0.8"/><line x1="4.4" y1="32" x2="12.8" y2="32" stroke="#cfcfcf" stroke-width="0.8"/><line x1="8.5" y1="26.8" x2="8.5" y2="34" stroke="#cfcfcf" stroke-width="0.8"/><path d="M11 31.5 Q15 29 18.5 31.5 Q20.5 35 17.5 38 Q14 40 11.5 37.5" stroke="#c8c8c8" stroke-width="2.8" fill="none"/><path d="M11 31.5 Q15 29 18.5 31.5 Q20.5 35 17.5 38 Q14 40 11.5 37.5" stroke="#e8f1f3" stroke-width="1.2" fill="none"/><rect x="5" y="46.5" width="9" height="11.5" fill="#fff" stroke="#1e1e1e" stroke-width="1.3"/><rect x="5.6" y="47.1" width="7.8" height="2.4" fill="#cde9f1"/><line x1="5" y1="49.5" x2="14" y2="49.5" stroke="#1e1e1e" stroke-width="1.04"/><line x1="5" y1="52.3" x2="14" y2="52.3" stroke="#1e1e1e" stroke-width="1.04"/><line x1="5" y1="55.1" x2="14" y2="55.1" stroke="#1e1e1e" stroke-width="1.04"/><line x1="9.5" y1="49.5" x2="9.5" y2="58" stroke="#1e1e1e" stroke-width="1.04"/><path d="M11.5 53.5 L19 60.8 M19 53.5 L11.5 60.8" stroke="#3a1a1a" stroke-width="2.6"/><path d="M11.5 53.5 L19 60.8 M19 53.5 L11.5 60.8" stroke="#e03c3c" stroke-width="1.3"/></svg>
<svg style="left:158px;top:44px" width="22" height="64" viewBox="0 0 22 64"><rect x="5.2" y="2.4" width="15.3" height="12.6" fill="#fff" stroke="#1e1e1e" stroke-width="1.2"/><rect x="5.8" y="3.0" width="14.100000000000001" height="2.0" fill="#cde9f1"/><line x1="5.2" y1="5" x2="20.5" y2="5" stroke="#1e1e1e" stroke-width="0.96"/><line x1="5.2" y1="7.6" x2="20.5" y2="7.6" stroke="#1e1e1e" stroke-width="0.96"/><line x1="5.2" y1="10.2" x2="20.5" y2="10.2" stroke="#1e1e1e" stroke-width="0.96"/><line x1="5.2" y1="12.6" x2="20.5" y2="12.6" stroke="#1e1e1e" stroke-width="0.96"/><line x1="10.5" y1="5" x2="10.5" y2="15" stroke="#1e1e1e" stroke-width="0.96"/><path d="M16.3 8.6V17.8M11.7 13.2H20.9" stroke="#1a1a1a" stroke-width="3.2"/><path d="M16.3 9.4V17M12.5 13.2H20.1" stroke="#cfe9f1" stroke-width="1.3"/><rect x="5.2" y="24" width="15.3" height="15.5" fill="#fff" stroke="#1e1e1e" stroke-width="1.2"/><rect x="5.8" y="24.6" width="14.100000000000001" height="2.0000000000000013" fill="#cde9f1"/><line x1="5.2" y1="26.6" x2="20.5" y2="26.6" stroke="#1e1e1e" stroke-width="0.96"/><line x1="5.2" y1="29.3" x2="20.5" y2="29.3" stroke="#1e1e1e" stroke-width="0.96"/><line x1="5.2" y1="32" x2="20.5" y2="32" stroke="#1e1e1e" stroke-width="0.96"/><line x1="5.2" y1="34.7" x2="20.5" y2="34.7" stroke="#1e1e1e" stroke-width="0.96"/><line x1="5.2" y1="37.2" x2="20.5" y2="37.2" stroke="#1e1e1e" stroke-width="0.96"/><line x1="10.5" y1="26.6" x2="10.5" y2="39.5" stroke="#1e1e1e" stroke-width="0.96"/><line x1="15.5" y1="26.6" x2="15.5" y2="39.5" stroke="#1e1e1e" stroke-width="0.96"/><path d="M7.5 39 Q9 32 15.5 31.5 V29 L20.5 33.5 L15.5 38 V35.5 Q11 35 7.5 39Z" fill="#cfe9f1" stroke="#1a1a1a" stroke-width="0.9"/><rect x="5.5" y="50" width="8.5" height="8.5" fill="#fff" stroke="#1a1a1a" stroke-width="1.1"/><path d="M2 51.5 H8.5 V49 L13 51.5 L8.5 54 V51.5" fill="#cfe9f1" stroke="#1a1a1a" stroke-width="1"/><path d="M2.2 50.5 H8.5 V48.6 L13.2 51.6 L8.5 54.6 V52.6 H2.2Z" fill="#cfe9f1" stroke="#1a1a1a" stroke-width="1"/><path d="M16.5 56.5 H10 V54.6 L5.3 57.6 L10 60.6 V58.6 H16.5Z" fill="#cfe9f1" stroke="#1a1a1a" stroke-width="1"/><circle cx="12.3" cy="50.8" r="1.1" fill="#f2d24a"/></svg>
<svg style="left:376px;top:44px" width="22" height="64" viewBox="0 0 22 64"><rect x="3.6" y="3.6" width="12.8" height="11.8" fill="#cdcdcd" stroke="#c4c4c4" stroke-width="0.8" stroke-dasharray="1.2 0.8"/><path d="M8 7.5 L13.5 9.5 L12 11 L16 15 L15 16 L11 12 L9.5 13.5Z" fill="#e6f2f5" stroke="#c0c0c0" stroke-width="0.7"/><circle cx="10" cy="32" r="6.6" fill="none" stroke="#f3b8b8" stroke-width="1.3"/><path d="M7 28.5 L12.5 30.5 L11 32 L14.5 35.5 L13.5 36.5 L10 33 L8.5 34.5Z" fill="#e6eef0" stroke="#bcbcbc" stroke-width="0.7"/><path d="M5.5 36.5 L14.5 27.5" stroke="#f3b8b8" stroke-width="1.3"/><rect x="5.2" y="47.3" width="13.6" height="13.6" fill="#6cc04a" stroke="#222" stroke-width="1.3"/><path d="M11 48 H18.2 V58 Z" fill="#cfe9f1"/><path d="M10.2 58.8 L7.2 53.8 A3.3 3.3 0 1 1 13.2 53.8Z" fill="#444"/><circle cx="10.2" cy="52.3" r="1.5" fill="#6cc04a"/><rect x="14.5" y="56.5" width="1.8" height="1.8" fill="#000"/></svg>
<svg style="left:667px;top:44px" width="22" height="64" viewBox="0 0 22 64"><rect x="3.3" y="3.3" width="13.5" height="13.5" fill="#cdeaf2" stroke="#222" stroke-width="1.3"/><rect x="4" y="4" width="12.1" height="2.2" fill="#fff"/><line x1="3.3" y1="6.2" x2="16.8" y2="6.2" stroke="#222" stroke-width="0.9"/><circle cx="10" cy="8.9" r="0.9" fill="#111"/><path d="M9 10.5 H10.8 V14 H11.8 V15 H7.5 V14 H8.8 V11.5 H8.3Z" fill="#111"/><path d="M11 25.5 L7 31 H10 L8.5 35 L14.5 29.5 H11.5 L13.5 25.5Z" fill="#f4efc8" stroke="#e3dfc0" stroke-width="0.6"/><rect x="3.3" y="34.7" width="6" height="4.2" rx="2.1" fill="none" stroke="#cdcdcd" stroke-width="1.1"/><rect x="10.5" y="34.7" width="6" height="4.2" rx="2.1" fill="none" stroke="#cdcdcd" stroke-width="1.1"/><line x1="8" y1="36.8" x2="12" y2="36.8" stroke="#cdcdcd" stroke-width="1"/><path d="M10.5 47.3 L6.3 53 H9.3 L7.8 57 L14.5 51.3 H11.3 L13.5 47.3Z" fill="#f5df3c" stroke="#333" stroke-width="0.8"/><rect x="3.3" y="56.5" width="6" height="4.5" rx="2.2" fill="none" stroke="#222" stroke-width="1.1"/><line x1="8" y1="58.7" x2="10.5" y2="58.7" stroke="#222" stroke-width="1"/><rect x="10.4" y="54.5" width="7.4" height="7.2" fill="#fff" stroke="#222" stroke-width="1.1"/><path d="M12 58.2 L13.6 59.8 L16.4 56.4" stroke="#222" stroke-width="1.1" fill="none"/></svg>
<svg style="left:775px;top:44px" width="22" height="64" viewBox="0 0 22 64"><rect x="3.3" y="3.3" width="13.5" height="13.5" fill="#fff" stroke="#222" stroke-width="1.3"/><line x1="3.3" y1="5.8" x2="16.8" y2="5.8" stroke="#222" stroke-width="0.9"/><path d="M5.3 8 L6.8 9.4 L9.3 6.8 M5.3 12.4 L6.8 13.8 L9.3 11.2" stroke="#111" stroke-width="1.2" fill="none"/><path d="M11.2 8.3 H14.8 M11.2 13 H14.8" stroke="#555" stroke-width="1.3"/><path d="M3.2 39 L8.3 25.3 H10.5 L15.3 39 H13.1 L11.9 35.3 H6.7 L5.4 39Z M7.3 33.4 H11.3 L9.3 27.5Z" fill="#173f7c"/><path d="M13.5 26 L17 27.3 L13.5 28.8Z" fill="#2a6fc0"/><g fill="none" stroke="#333" stroke-width="0.9"><rect x="3.6" y="47.6" width="11.5" height="11.5"/><path d="M3.6 50.5H15.1M3.6 53.4H15.1M3.6 56.2H15.1M6.5 47.6V59.1M9.4 47.6V59.1M12.2 47.6V59.1"/></g><rect x="9.8" y="53.7" width="7" height="7.3" fill="#fff" stroke="#222" stroke-width="1.1"/><path d="M11.4 57.3 L12.9 58.7 L15.4 55.8" stroke="#222" stroke-width="1" fill="none"/></svg>
<svg style="left:863px;top:44px" width="22" height="64" viewBox="0 0 22 64"><path d="M3.3 3.6 H16.8 L11.6 10 V16.6 H8.5 V10Z" fill="#d4eef4" stroke="#1a1a1a" stroke-width="1.3" stroke-linejoin="round"/><path d="M3 32 L6 25.3 H7.3 L10.3 32 H8.8 L8.1 30.3 H5.2 L4.5 32Z M5.7 29 H7.6 L6.6 26.7Z" fill="#1a64b8"/><path d="M3.2 33.3 H9.3 V34.6 L5.4 38 H9.3 V39.3 H3.2 V38 L7.1 34.6 H3.2Z" fill="#f25a3c"/><path d="M13 25.5 V36" stroke="#1f7fe0" stroke-width="1.6"/><path d="M10 34.5 H16 L13 39Z" fill="#1f7fe0"/><path d="M3 54 L6 47.3 H7.3 L10.3 54 H8.8 L8.1 52.3 H5.2 L4.5 54Z" fill="#b6c8dc"/><path d="M3.2 55.3 H9.3 V56.6 L5.4 60 H9.3 V61.3 H3.2 V60 L7.1 56.6 H3.2Z" fill="#ecc6c0"/><path d="M8 47.6 H16.8 L13 52.5 V55 H11.5 V52.5Z" fill="#e2eef2" stroke="#c4c4c4" stroke-width="0.9"/><circle cx="13.3" cy="58" r="3.2" fill="#f4f4f4" stroke="#c4c4c4" stroke-width="0.9"/></svg>
<svg style="left:932px;top:44px" width="22" height="64" viewBox="0 0 22 64"><path d="M6 6 A6 6 0 1 0 12 6" stroke="#c9c9c9" stroke-width="2.2" fill="none"/><line x1="9" y1="3.5" x2="9" y2="9.5" stroke="#c9c9c9" stroke-width="2"/><path d="M8 37.5 Q3.5 36 3.5 32 Q3.5 28 8.5 28 H10.5" stroke="#c9c9c9" stroke-width="3" fill="none"/><path d="M8 37.5 Q3.5 36 3.5 32 Q3.5 28 8.5 28 H10.5" stroke="#e8f2f4" stroke-width="1.4" fill="none"/><path d="M10 25 L15.5 28.7 L10 32.3Z" fill="#e8f2f4" stroke="#c9c9c9" stroke-width="0.9"/><path d="M6.5 48.5 L10.3 47.3 L14 48.5 L17.5 47.3 V59.5 L14 60.7 L10.3 59.5 L6.5 60.7Z" fill="#e7efd8" stroke="#c6c6c6" stroke-width="0.9"/><rect x="7.5" y="49.5" width="3" height="3" fill="#c5d8ee"/><rect x="10.5" y="52.5" width="3" height="3" fill="#c5d8ee"/><rect x="7.5" y="55.5" width="3" height="3" fill="#c5d8ee"/><path d="M16.3 52 V61 M11.8 56.5 H20.8" stroke="#c6c6c6" stroke-width="2.8"/><path d="M16.3 52.8 V60.2 M12.6 56.5 H20" stroke="#e8f4f6" stroke-width="1.2"/></svg>
<svg style="left:1130px;top:44px" width="22" height="64" viewBox="0 0 22 64"><rect x="4.4" y="3.4" width="13.4" height="13.4" fill="#edf3f5" stroke="#c4c4c4" stroke-width="1"/><rect x="5" y="4" width="12.2" height="2.6" fill="#fff"/><rect x="6" y="9" width="2.6" height="2.6" fill="none" stroke="#c4c4c4" stroke-width="0.7"/><path d="M9 16.5 L15.5 10 L17 11.5 L10.5 18 L8.5 18.5Z" fill="#f3dfa4" stroke="#c4c4c4" stroke-width="0.6"/><rect x="5.5" y="25.5" width="13" height="13.3" fill="#f1f4e6" stroke="#c4c4c4" stroke-width="1"/><path d="M11 35.5 L12.5 28.5 Q13.5 27 14.5 28.5 L16 35.5 L14 34 L13.5 36 L13 34Z" fill="#f3e3b0" stroke="#aac4e0" stroke-width="0.7"/><path d="M3 28 H7 M5 27 V40" stroke="#c2c2c2" stroke-width="1.5"/><circle cx="7.8" cy="51" r="4.6" fill="#cfe3c0" stroke="#c4c4c4" stroke-width="0.8"/><path d="M7.8 46.5 Q6 49 7.8 51 Q9.5 53 7.8 55.5" stroke="#b8d0e8" stroke-width="1" fill="none"/><rect x="8.3" y="51.6" width="9.6" height="9.4" fill="#e6f3ef" stroke="#c4c4c4" stroke-width="1"/><path d="M9.5 56 L11 59 L12.5 56 L14 59 L15.5 56" stroke="#bcd9cc" stroke-width="1" fill="none"/></svg>
<svg style="left:0px;top:149px" width="13" height="14" viewBox="0 0 13 14"><rect x="0" y="0.5" width="12.3" height="13" fill="#fff5c8" stroke="#333" stroke-width="1"/><rect x="9" y="1" width="3" height="12" fill="#fff"/><line x1="9" y1="0.5" x2="9" y2="13.5" stroke="#333" stroke-width="0.9"/><rect x="1" y="2" width="2.5" height="2.5" fill="#f04848"/><rect x="5" y="2" width="2.5" height="2.5" fill="#f04848"/><path d="M2.3 4.5V12.5M6.3 4.5V12.5" stroke="#222" stroke-width="1"/></svg>
<svg style="left:429.8px;top:150px" width="12.2" height="6.2" viewBox="0 0 12.2 6.2"><path d="M0 0H12.2L6.1 6.2Z" fill="#fff"/></svg>
<svg style="left:451.5px;top:146.5px" width="10" height="9" viewBox="0 0 10 9"><path d="M3 0.5H8V5H9.5V6.2H5.8V8.8H4.8V6.2H0.8V5H3Z M4 1.4V5H7V1.4Z" fill="#fff"/></svg>
<svg style="left:473.5px;top:148.3px" width="8" height="8" viewBox="0 0 8 8"><path d="M0.5 0.5L7.5 7.5M7.5 0.5L0.5 7.5" stroke="#fff" stroke-width="1.4"/></svg>
<svg style="left:20.5px;top:173.5px" width="11" height="10" viewBox="0 0 11 10"><path d="M3.8 0.6H7.2V3.3H10.4V6.7H7.2V9.4H3.8V6.7H0.6V3.3H3.8Z" fill="#cfe9f1" stroke="#333" stroke-width="1.1"/></svg>
<svg style="left:40.5px;top:173px" width="11" height="11" viewBox="0 0 11 11"><path d="M1 1L10 10M10 1L1 10" stroke="#c2c2c2" stroke-width="2.4"/><path d="M1 1L10 10M10 1L1 10" stroke="#e6eef0" stroke-width="0.9"/></svg>
<svg style="left:64px;top:172.8px" width="10" height="11" viewBox="0 0 10 11"><path d="M5 0.6 L9.4 5 H6.8 V10.4 H3.2 V5 H0.6Z" fill="#e3f1f5" stroke="#c4c4c4" stroke-width="0.9"/></svg>
<svg style="left:84px;top:172.8px" width="10" height="11" viewBox="0 0 10 11"><path d="M5 10.4 L9.4 6 H6.8 V0.6 H3.2 V6 H0.6Z" fill="#e3f1f5" stroke="#c4c4c4" stroke-width="0.9"/></svg>
<svg style="left:466px;top:170.5px" width="15" height="15" viewBox="0 0 15 15"><circle cx="5.6" cy="5.6" r="4.4" fill="#fff" stroke="#333" stroke-width="1.3"/><path d="M8.8 8.8 L13.2 13.2" stroke="#333" stroke-width="3.2" stroke-linecap="round"/><path d="M9.3 9.3 L12.8 12.8" stroke="#f1d46a" stroke-width="1.5" stroke-linecap="round"/></svg>
<svg style="left:20.3px;top:198.3px" width="9" height="6" viewBox="0 0 9 6"><path d="M1 5 L4.5 1.5 L8 5" stroke="#333" stroke-width="1.8" fill="none"/></svg>
<svg style="left:22px;top:220px" width="6.5" height="6.5" viewBox="0 0 6.5 6.5"><path d="M6.2 0.2V6.2H0.2Z" fill="#444"/></svg>
<svg style="left:37.5px;top:217px" width="12" height="12" viewBox="0 0 14 14"><rect x="0.6" y="0.6" width="12.8" height="12.8" fill="#3a9e6b" stroke="#3a3a3a" stroke-width="1.2"/><rect x="1.2" y="1.2" width="11.6" height="2.4" fill="#fff"/><line x1="0.6" y1="3.7" x2="13.4" y2="3.7" stroke="#3a3a3a" stroke-width="0.9"/><path d="M9.3 4.6 L11.6 5 L8.2 8.8 L6.6 11.2 L5.3 10.3 L7.4 7.3Z M1.2 8.6 L3.3 11 L4 12.8 H1.2Z M6.8 12.8 L8.4 10.6 L10 12.8Z M10.8 12.8 L12.8 9.8 V12.8Z" fill="#cfeef2"/></svg>
<svg style="left:63px;top:244px" width="14" height="14" viewBox="0 0 14 14"><rect x="0.5" y="0.5" width="13" height="12.5" fill="#fff" stroke="#555" stroke-width="1.1"/><path d="M2.7 7.2 L6.2 10.3 L11.2 2.9" stroke="#111" stroke-width="1.9" fill="none"/></svg>
<svg style="left:63px;top:270px" width="14" height="14" viewBox="0 0 14 14"><rect x="0.5" y="0.5" width="13" height="12.5" fill="#fff" stroke="#555" stroke-width="1.1"/><path d="M2.7 7.2 L6.2 10.3 L11.2 2.9" stroke="#111" stroke-width="1.9" fill="none"/></svg>
<div class="t" style="left:88px;top:269px;font-size:15.6px;line-height:16px;color:#b4b4b4">Aa</div>
<svg style="left:104px;top:262px" width="110" height="26" viewBox="0 0 110 26"><path d="M1 3.3 L13.8 3.3 L13.8 2 L35.8 2 L35.8 2.6 L50 3.9 L59 5.1 L67.4 6.4 L99 7.2 L109.3 8 L109.3 23.8 L76 23.8 L61.6 22.6 L51.6 21.3 L35.8 20 L1 18.8Z" fill="#c6c300"/></svg>
<div class="t" style="left:118.7px;top:268.48px;font-size:11.6px;color:#111;">ParcelDimension</div>
<svg style="left:389px;top:240.5px" width="15" height="15" viewBox="0 0 15 15"><path d="M1 14 L1.8 10.2 L10.2 1.8 L14.2 5.8 L5.8 14.2 Z" fill="#e4e4e4" stroke="#c6c6c6" stroke-width="1.1" stroke-linejoin="round"/><path d="M1.2 13.8 L1.8 10.6 L5.4 14.2Z" fill="#f8f8f8"/></svg>
<svg style="left:389px;top:266.5px" width="15" height="15" viewBox="0 0 15 15"><path d="M1 14 L1.8 10.2 L10.2 1.8 L14.2 5.8 L5.8 14.2 Z" fill="#bdbdbd" stroke="#a4a4a4" stroke-width="1.1" stroke-linejoin="round"/><path d="M1.2 13.8 L1.8 10.6 L5.4 14.2Z" fill="#f8f8f8"/></svg>
<svg style="left:409px;top:240px" width="16" height="16" viewBox="0 0 16 16"><path d="M1 1.5 L11 2.5 L11.5 9 L9 9.5 L9 13 L1.5 12Z" fill="#e4e4e4" stroke="#c4c4c4" stroke-width="1.1" stroke-dasharray="1.6 1"/><path d="M7.5 6.5 L14 9 L11.8 10.3 L14.5 13 L13 14.5 L10.3 11.8 L9 14Z" fill="#cfe9f1" stroke="#c4c4c4" stroke-width="0.9"/></svg>
<svg style="left:409px;top:266px" width="16" height="16" viewBox="0 0 16 16"><path d="M1 1.5 L11 2.5 L11.5 9 L9 9.5 L9 13 L1.5 12Z" fill="#f4d35e" stroke="#222" stroke-width="1.1" stroke-dasharray="1.6 1"/><path d="M7.5 6.5 L14 9 L11.8 10.3 L14.5 13 L13 14.5 L10.3 11.8 L9 14Z" fill="#cfe9f1" stroke="#444" stroke-width="0.9"/></svg>
<svg style="left:434px;top:216.5px" width="15" height="15" viewBox="0 0 15 15"><path d="M1 7.5 L6.5 1.5 H13.2 V13.5 H6.5Z" fill="#c8e0b8" stroke="#3a3a3a" stroke-width="1.1"/><rect x="9" y="3" width="2.6" height="3" fill="none" stroke="#3a3a3a" stroke-width="0.8"/><path d="M7 7.5 L14.5 10 L12 11.3 L14.8 14 L13.3 15.3 L10.8 12.5 L9.5 14.8Z" fill="#cfe9f1" stroke="#222" stroke-width="0.9"/></svg>
<svg style="left:434px;top:266px" width="15" height="15" viewBox="0 0 15 15"><path d="M1 7.5 L6.5 1.5 H13.2 V13.5 H6.5Z" fill="#cfe0c4" stroke="#9a9a9a" stroke-width="1.1"/><rect x="9" y="3" width="2.6" height="3" fill="none" stroke="#9a9a9a" stroke-width="0.8"/><circle cx="10.5" cy="10.5" r="4.3" fill="#c3c3c3" stroke="#8a8a8a" stroke-width="1.2"/><line x1="10.5" y1="6.5" x2="10.5" y2="10.5" stroke="#8a8a8a" stroke-width="1.2"/></svg>
<svg style="left:20.7px;top:428px" width="9" height="6" viewBox="0 0 9 6"><path d="M1 5 L4.5 1.5 L8 5" stroke="#333" stroke-width="1.8" fill="none"/></svg>
<svg style="left:117px;top:448.5px" width="10" height="6" viewBox="0 0 10 6"><path d="M0 0H10L5 5.8Z" fill="#3c6e96"/></svg>
<svg style="left:32.7px;top:470.5px" width="9" height="6" viewBox="0 0 9 6"><path d="M1 5 L4.5 1.5 L8 5" stroke="#333" stroke-width="1.8" fill="none"/></svg>
<svg style="left:46px;top:486.5px" width="16" height="11" viewBox="0 0 16 11"><path d="M0.5 10.5 V4.5 L6.8 0.5 L15.5 7.5 V10.5Z" fill="#d6d6d6"/><path d="M5.2 6.8 A1.8 1.8 0 1 1 8.5 6.8 L6.9 9.6Z" fill="#2d5fb0"/></svg>
<svg style="left:20.7px;top:522.5px" width="9" height="6" viewBox="0 0 9 6"><path d="M1 5 L4.5 1.5 L8 5" stroke="#333" stroke-width="1.8" fill="none"/></svg>
<svg style="left:29.3px;top:543.5px" width="9" height="6" viewBox="0 0 9 6"><path d="M1 5 L4.5 1.5 L8 5" stroke="#333" stroke-width="1.8" fill="none"/></svg>
<svg style="left:45px;top:559.5px" width="14" height="14" viewBox="0 0 14 14"><rect x="0.5" y="0.5" width="13" height="12.5" fill="#fff" stroke="#555" stroke-width="1.1"/><path d="M2.7 7.2 L6.2 10.3 L11.2 2.9" stroke="#111" stroke-width="1.9" fill="none"/></svg>
<svg style="left:67px;top:560px" width="14" height="14" viewBox="0 0 14 14"><rect x="0.6" y="0.6" width="12.8" height="12.8" fill="#3a9e6b" stroke="#3a3a3a" stroke-width="1.2"/><rect x="1.2" y="1.2" width="11.6" height="2.4" fill="#fff"/><line x1="0.6" y1="3.7" x2="13.4" y2="3.7" stroke="#3a3a3a" stroke-width="0.9"/><path d="M9.3 4.6 L11.6 5 L8.2 8.8 L6.6 11.2 L5.3 10.3 L7.4 7.3Z M1.2 8.6 L3.3 11 L4 12.8 H1.2Z M6.8 12.8 L8.4 10.6 L10 12.8Z M10.8 12.8 L12.8 9.8 V12.8Z" fill="#cfeef2"/></svg>
<svg style="left:29.3px;top:587.5px" width="9" height="6" viewBox="0 0 9 6"><path d="M1 5 L4.5 1.5 L8 5" stroke="#333" stroke-width="1.8" fill="none"/></svg>
<svg style="left:45px;top:603.5px" width="14" height="14" viewBox="0 0 14 14"><rect x="0.5" y="0.5" width="13" height="12.5" fill="#fff" stroke="#555" stroke-width="1.1"/><path d="M2.7 7.2 L6.2 10.3 L11.2 2.9" stroke="#111" stroke-width="1.9" fill="none"/></svg>
<svg style="left:67px;top:604px" width="14" height="14" viewBox="0 0 14 14"><rect x="0.6" y="0.6" width="12.8" height="12.8" fill="#fff" stroke="#444" stroke-width="1.2"/><rect x="1.2" y="1.2" width="11.6" height="2.6" fill="#cde9f1"/><path d="M0.6 3.9H13.4M0.6 6.3H13.4M0.6 8.7H13.4M0.6 11.1H13.4M4.9 3.9V13.4M9.1 3.9V13.4" stroke="#444" stroke-width="1"/></svg>
<svg style="left:24px;top:937px" width="14" height="14" viewBox="0 0 14 14"><rect x="0.5" y="0.5" width="13" height="12.5" fill="#fff" stroke="#333" stroke-width="1"/><line x1="0.5" y1="2.8" x2="13.5" y2="2.8" stroke="#333" stroke-width="1"/><path d="M2.3 5V6.2M2.3 8V9.2" stroke="#333" stroke-width="1"/><line x1="4.5" y1="2.8" x2="4.5" y2="13" stroke="#333" stroke-width="0.8"/><rect x="5" y="3.3" width="8" height="9.2" fill="#cfe9f1"/><circle cx="8.8" cy="8.2" r="3" fill="#fff" stroke="#333" stroke-width="1"/><path d="M10.8 10.3 L13 12.8" stroke="#d9b23a" stroke-width="1.6"/></svg>
<svg style="left:103px;top:937px" width="14" height="14" viewBox="0 0 14 14"><rect x="0.5" y="0.5" width="13" height="12.5" fill="#fff" stroke="#333" stroke-width="1"/><line x1="0.5" y1="2.8" x2="13.5" y2="2.8" stroke="#333" stroke-width="1"/><path d="M2 5.8 L3.5 7.2 L6 4.5 M2 9.8 L3.5 11.2 L6 8.5" stroke="#2f86d8" stroke-width="1.2" fill="none"/><path d="M7.5 5.5H11.5M7.5 8H11.5M7.5 10.5H11.5" stroke="#333" stroke-width="1"/></svg>
<svg style="left:500px;top:146px" width="14" height="14" viewBox="0 0 14 14"><rect x="0.6" y="0.6" width="12.8" height="12.8" fill="#3a9e6b" stroke="#3a3a3a" stroke-width="1.2"/><rect x="1.2" y="1.2" width="11.6" height="2.4" fill="#fff"/><line x1="0.6" y1="3.7" x2="13.4" y2="3.7" stroke="#3a3a3a" stroke-width="0.9"/><path d="M9.3 4.6 L11.6 5 L8.2 8.8 L6.6 11.2 L5.3 10.3 L7.4 7.3Z M1.2 8.6 L3.3 11 L4 12.8 H1.2Z M6.8 12.8 L8.4 10.6 L10 12.8Z M10.8 12.8 L12.8 9.8 V12.8Z" fill="#cfeef2"/></svg>
<svg style="left:670px;top:150.8px" width="8" height="8" viewBox="0 0 8 8"><path d="M0.5 0.5L7.5 7.5M7.5 0.5L0.5 7.5" stroke="#666" stroke-width="1.3"/></svg>
<svg style="left:1429px;top:152px" width="8" height="6" viewBox="0 0 8 6"><path d="M0 0H8L4 5.8Z" fill="#777"/></svg>
<svg style="left:1429.5px;top:629px" width="8" height="6" viewBox="0 0 8 6"><path d="M0 0H8L4 5.8Z" fill="#777"/></svg>
<svg style="left:500px;top:623px" width="14" height="14" viewBox="0 0 14 14"><rect x="0.6" y="0.6" width="12.8" height="12.8" fill="#fff" stroke="#222" stroke-width="1.2"/><rect x="1.2" y="1.2" width="11.6" height="2.6" fill="#cde9f1"/><path d="M0.6 3.9H13.4M0.6 6.3H13.4M0.6 8.7H13.4M0.6 11.1H13.4M4.9 3.9V13.4M9.1 3.9V13.4" stroke="#222" stroke-width="1"/></svg>
<svg style="left:676.8px;top:627.5px" width="11" height="10" viewBox="0 0 11 10"><path d="M5.5 0.3 L10.8 5 L5.5 9.7 L0.2 5Z" fill="#ffc800"/></svg>
<svg style="left:695px;top:628.3px" width="7.5" height="7.5" viewBox="0 0 7.5 7.5"><path d="M0.5 0.5L7 7M7 0.5L0.5 7" stroke="#fff" stroke-width="1.4"/></svg>
</body></html>
